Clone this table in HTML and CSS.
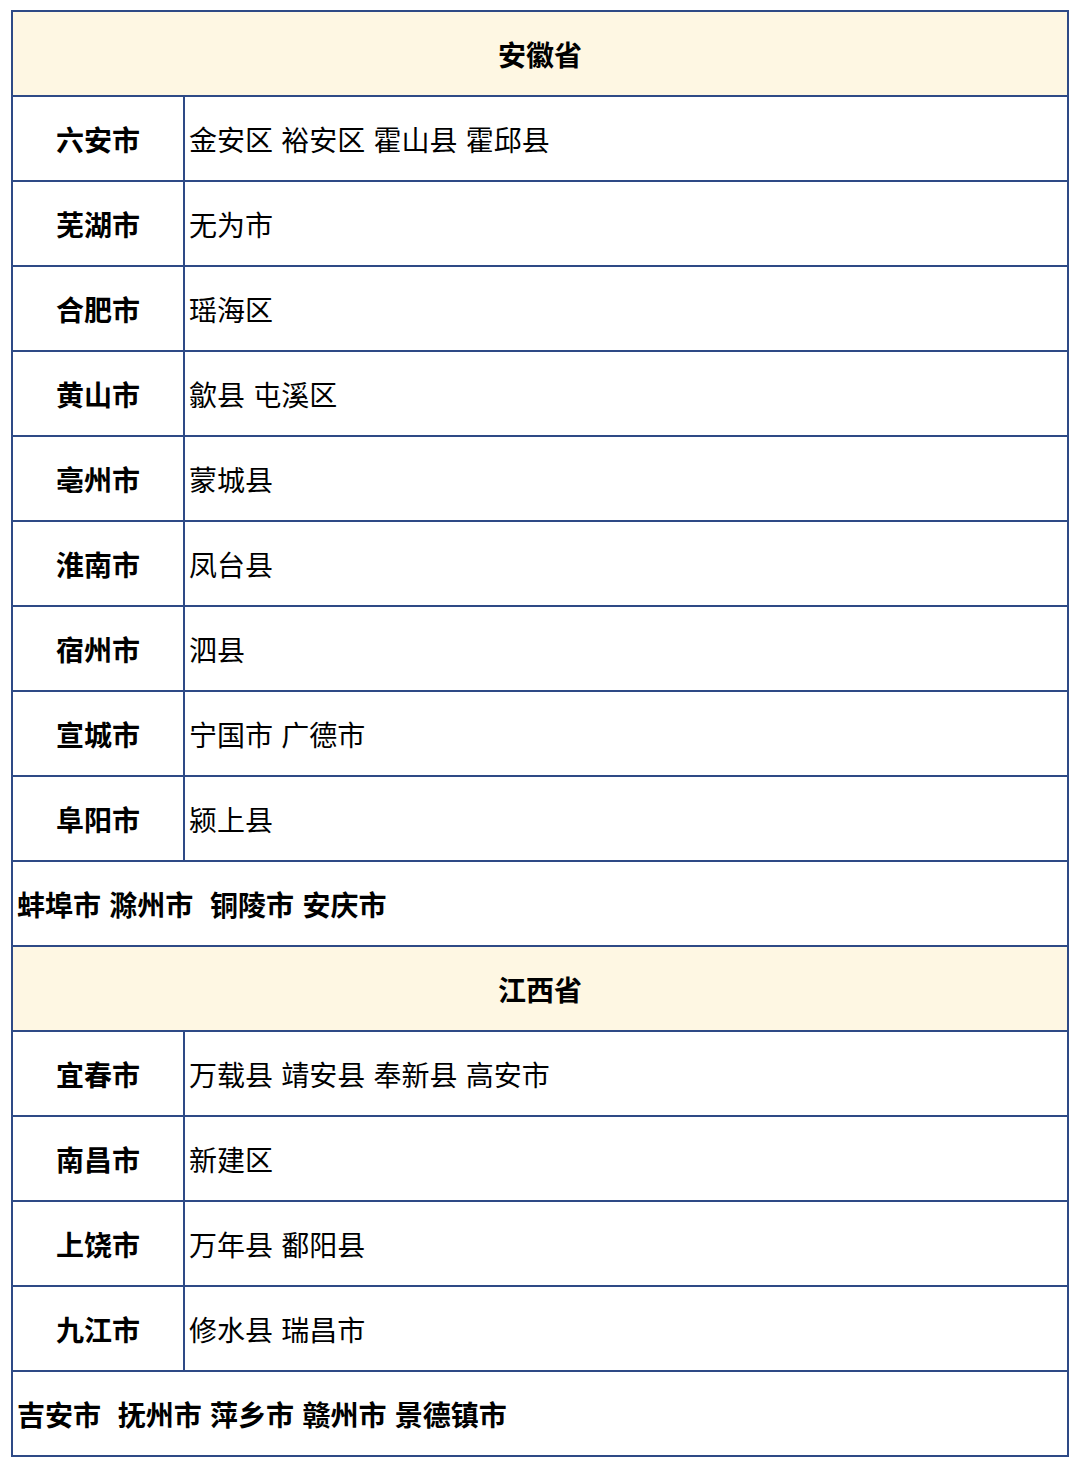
FILE: index.html
```html
<!DOCTYPE html>
<html lang="zh-CN">
<head>
<meta charset="utf-8">
<link rel="stylesheet" href="styles.css">
</head>
<body>
<div class="page">
<table class="regions">
  <colgroup><col class="col-city"><col class="col-dist"></colgroup>
  <tr class="prov"><td colspan="2">安徽省</td></tr>
  <tr><td class="city">六安市</td><td class="dist">金安区 裕安区 霍山县 霍邱县</td></tr>
  <tr><td class="city">芜湖市</td><td class="dist">无为市</td></tr>
  <tr><td class="city">合肥市</td><td class="dist">瑶海区</td></tr>
  <tr><td class="city">黄山市</td><td class="dist">歙县 屯溪区</td></tr>
  <tr><td class="city">亳州市</td><td class="dist">蒙城县</td></tr>
  <tr><td class="city">淮南市</td><td class="dist">凤台县</td></tr>
  <tr><td class="city">宿州市</td><td class="dist">泗县</td></tr>
  <tr><td class="city">宣城市</td><td class="dist">宁国市 广德市</td></tr>
  <tr><td class="city">阜阳市</td><td class="dist">颍上县</td></tr>
  <tr><td class="all" colspan="2">蚌埠市 滁州市  铜陵市 安庆市</td></tr>
  <tr class="prov"><td colspan="2">江西省</td></tr>
  <tr><td class="city">宜春市</td><td class="dist">万载县 靖安县 奉新县 高安市</td></tr>
  <tr><td class="city">南昌市</td><td class="dist">新建区</td></tr>
  <tr><td class="city">上饶市</td><td class="dist">万年县 鄱阳县</td></tr>
  <tr><td class="city">九江市</td><td class="dist">修水县 瑞昌市</td></tr>
  <tr><td class="all" colspan="2">吉安市  抚州市 萍乡市 赣州市 景德镇市</td></tr>
</table>
</div>
</body>
</html>
```
FILE: styles.css
```css
html, body {
  margin: 0;
  padding: 0;
  background: #ffffff;
}
.page {
  padding: 10px 0 0 11px;
}
.regions {
  border-collapse: collapse;
  width: 1058px;
  table-layout: fixed;
  font-family: "Noto Sans CJK SC", "Liberation Sans", sans-serif;
  font-size: 28px;
  word-spacing: 2px;
  color: #000;
}
.col-city {
  width: 172px;
}
.regions td {
  border: 2px solid #2e4a86;
  height: 83px;
  padding: 0 4px;
  vertical-align: middle;
  line-height: 1;
}
.prov td {
  background: #fef7e3;
  text-align: center;
  font-weight: 700;
}
.city {
  text-align: center;
  font-weight: 700;
}
.dist {
  text-align: left;
}
.all {
  text-align: left;
  font-weight: 700;
  white-space: pre;
}
```
